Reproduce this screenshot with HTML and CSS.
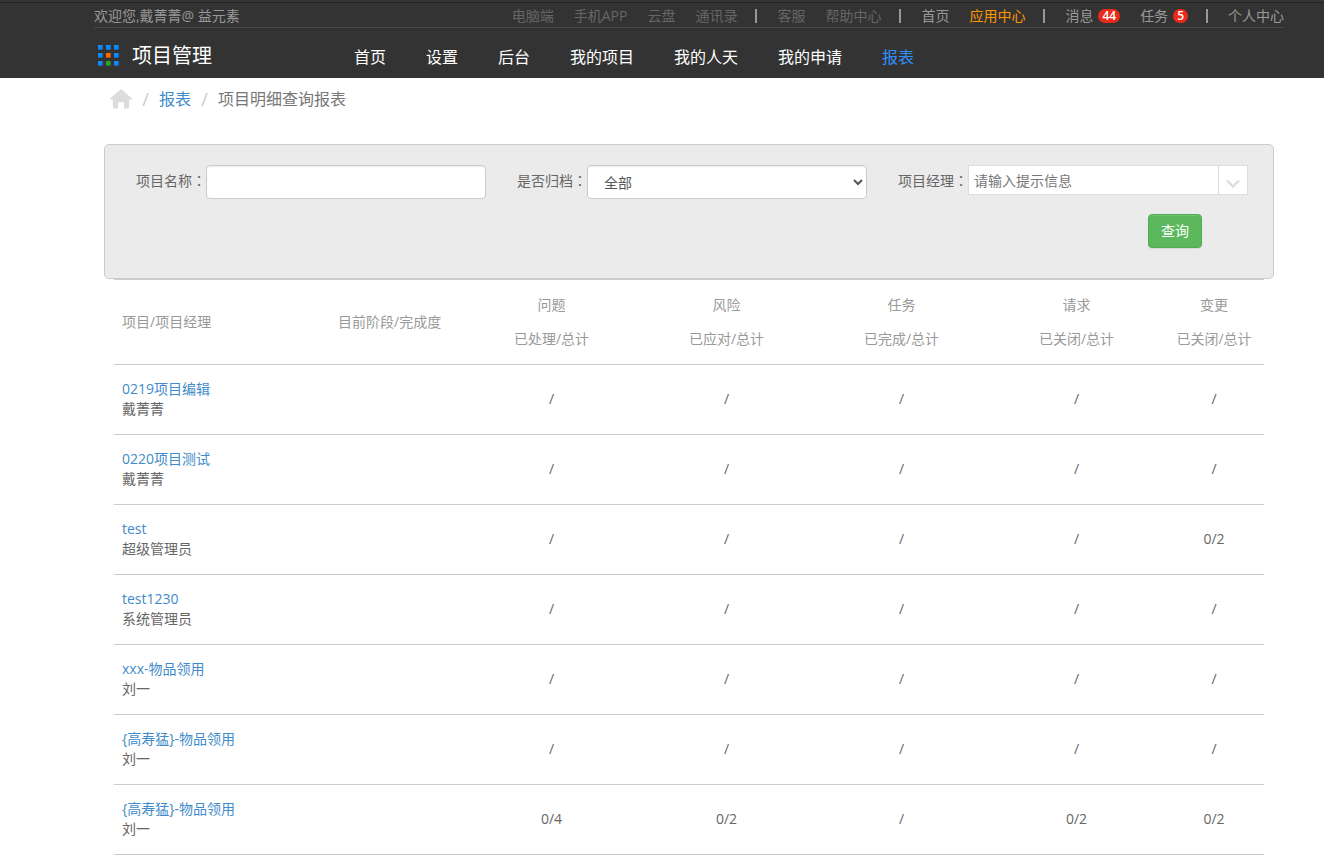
FILE: index.html
```html
<!DOCTYPE html>
<html lang="zh-CN">
<head>
<meta charset="utf-8">
<title>项目明细查询报表</title>
<link rel="stylesheet" href="styles.css">
</head>
<body>
<header class="header">
  <div class="topbar">
    <span class="welcome">欢迎您,戴菁菁@ 益元素</span>
    <ul class="toplinks">
      <li><a class="dim" href="#">电脑端</a></li>
      <li><a class="dim" href="#">手机APP</a></li>
      <li><a class="dim" href="#">云盘</a></li>
      <li><a class="dim" href="#">通讯录</a></li>
      <li class="bar"></li>
      <li><a class="dim" href="#">客服</a></li>
      <li><a class="dim" href="#">帮助中心</a></li>
      <li class="bar"></li>
      <li><a href="#">首页</a></li>
      <li><a class="hot" href="#">应用中心</a></li>
      <li class="bar"></li>
      <li><a href="#">消息<span class="badge">44</span></a></li>
      <li><a href="#">任务<span class="badge">5</span></a></li>
      <li class="bar"></li>
      <li><a href="#">个人中心</a></li>
    </ul>
  </div>
  <div class="mainbar">
    <a class="brand" href="#">
      <svg width="22" height="22" viewBox="0 0 22 22" aria-hidden="true">
        <g fill="#0a8cff">
          <rect x="0" y="0" width="4.6" height="4.6"/><rect x="8" y="0" width="4.6" height="4.6"/><rect x="16" y="0" width="4.6" height="4.6"/>
          <rect x="0" y="8" width="4.6" height="4.6"/><rect x="16" y="8" width="4.6" height="4.6"/>
          <rect x="0" y="16" width="4.6" height="4.6"/><rect x="16" y="16" width="4.6" height="4.6"/>
        </g>
        <rect x="8" y="8" width="4.6" height="4.6" fill="#ff6a00"/>
        <rect x="8" y="16" width="4.6" height="4.6" fill="#2aa52a"/>
      </svg>
      <span>项目管理</span>
    </a>
    <nav class="nav">
      <a href="#">首页</a>
      <a href="#">设置</a>
      <a href="#">后台</a>
      <a href="#">我的项目</a>
      <a href="#">我的人天</a>
      <a href="#">我的申请</a>
      <a class="active" href="#">报表</a>
    </nav>
  </div>
</header>

<main class="page">
  <nav class="crumbs">
    <a class="home" href="#" aria-label="首页">
      <svg width="22" height="20" viewBox="0 0 22 20" aria-hidden="true">
        <path fill="#dcdcdc" d="M11 0 L22 9.4 Q22 10.6 20.6 10.6 H19.2 V17.5 Q19.2 19.6 17.2 19.6 H14 V14.5 Q14 13.2 12.8 13.2 H9.2 Q8 13.2 8 14.5 V19.6 H4.8 Q2.8 19.6 2.8 17.5 V10.6 H1.4 Q0 10.6 0 9.4 Z"/>
      </svg>
    </a>
    <span class="sep">/</span>
    <a href="#">报表</a>
    <span class="sep">/</span>
    <span>项目明细查询报表</span>
  </nav>

  <form class="filter">
    <div class="fields">
      <div class="field">
        <label for="name">项目名称<span class="colon" lang="zh-TW">：</span></label>
        <input class="control" id="name" type="text">
      </div>
      <div class="field">
        <label for="archived">是否归档<span class="colon" lang="zh-TW">：</span></label>
        <select class="control" id="archived"><option>全部</option></select>
      </div>
      <div class="field">
        <label for="manager">项目经理<span class="colon" lang="zh-TW">：</span></label>
        <div class="combo">
          <input id="manager" type="text" placeholder="请输入提示信息">
          <button type="button" aria-label="展开">
            <svg width="16" height="10" viewBox="0 0 16 10" aria-hidden="true"><path d="M2 1.5 L8 7.5 L14 1.5" fill="none" stroke="#ddd" stroke-width="2.4"/></svg>
          </button>
        </div>
      </div>
    </div>
    <div class="actions"><button class="query" type="button">查询</button></div>
  </form>

  <table class="report">
    <colgroup>
      <col class="c-name"><col class="c-stage"><col class="c-num"><col class="c-num"><col class="c-num"><col class="c-num"><col class="c-last">
    </colgroup>
    <thead>
      <tr>
        <th class="left">项目/项目经理</th>
        <th class="left">目前阶段/完成度</th>
        <th>问题<br>已处理/总计</th>
        <th>风险<br>已应对/总计</th>
        <th>任务<br>已完成/总计</th>
        <th>请求<br>已关闭/总计</th>
        <th>变更<br>已关闭/总计</th>
      </tr>
    </thead>
    <tbody>
      <tr><td class="left"><a href="#">0219项目编辑</a><br>戴菁菁</td><td></td><td>/</td><td>/</td><td>/</td><td>/</td><td>/</td></tr>
      <tr><td class="left"><a href="#">0220项目测试</a><br>戴菁菁</td><td></td><td>/</td><td>/</td><td>/</td><td>/</td><td>/</td></tr>
      <tr><td class="left"><a href="#">test</a><br>超级管理员</td><td></td><td>/</td><td>/</td><td>/</td><td>/</td><td>0/2</td></tr>
      <tr><td class="left"><a href="#">test1230</a><br>系统管理员</td><td></td><td>/</td><td>/</td><td>/</td><td>/</td><td>/</td></tr>
      <tr><td class="left"><a href="#">xxx-物品领用</a><br>刘一</td><td></td><td>/</td><td>/</td><td>/</td><td>/</td><td>/</td></tr>
      <tr><td class="left"><a href="#">{高寿猛}-物品领用</a><br>刘一</td><td></td><td>/</td><td>/</td><td>/</td><td>/</td><td>/</td></tr>
      <tr><td class="left"><a href="#">{高寿猛}-物品领用</a><br>刘一</td><td></td><td>0/4</td><td>0/2</td><td>/</td><td>0/2</td><td>0/2</td></tr>
    </tbody>
  </table>
</main>
</body>
</html>
```
FILE: styles.css
```css
* { box-sizing: border-box; }

body {
  margin: 0;
  background: #fff;
  color: #666;
  font: 14px/20px "Open Sans", "Noto Sans CJK SC", sans-serif;
}

a { color: #428bca; text-decoration: none; }
input, select, button { font: inherit; color: inherit; }

/* Header */
.header {
  background: #333;
  border-top: 2px solid #35363a;
  box-shadow: inset 0 1px #222;
  padding: 0 40px 0 94px;
}

.topbar {
  display: flex;
  justify-content: space-between;
  height: 26px;
  padding-top: 4px;
  border-bottom: 1px solid #484848;
  color: #999;
  white-space: nowrap;
}

.toplinks { display: flex; margin: 0; padding: 0; list-style: none; }
.toplinks li { margin-left: 20px; }
.toplinks .bar { width: 2px; height: 14px; margin: 3px 0 0 18px; background: #999; }
.toplinks a { display: flex; align-items: center; color: #999; }
.toplinks .dim { color: #666; }
.toplinks .hot { color: #ff9800; }

.badge {
  margin-left: 5px;
  padding: 0 4px;
  border-radius: 7px;
  background: #ea2a1b;
  color: #fff;
  font-size: 12px;
  font-weight: 600;
  line-height: 14px;
}

.mainbar { display: flex; align-items: center; height: 50px; }
.brand {
  display: flex;
  align-items: center;
  gap: 12px;
  width: 260px;
  padding: 5px 0 0 4px;
  color: #fff;
  font-size: 20px;
  line-height: 30px;
}
.nav { display: flex; gap: 40px; padding-top: 8px; font-size: 16px; line-height: 24px; white-space: nowrap; }
.nav a { color: #fff; }
.nav .active { color: #2f8fff; }

/* Page */
.page { padding: 0 50px 4px 104px; }

.crumbs {
  display: flex;
  align-items: center;
  gap: 10px;
  height: 42px;
  padding-left: 6px;
  font-size: 16px;
  line-height: 24px;
  color: #777;
}
.home { display: flex; }
.sep { width: 7px; color: #ccc; font-size: 18px; text-align: center; }

/* Filter panel */
.filter {
  margin-top: 24px;
  padding: 20px 25px 30px 31px;
  border: 1px solid #ccc;
  border-radius: 5px;
  background: #ebebeb;
}
.fields { display: flex; gap: 31px; }
.field { display: flex; flex: 1; align-items: flex-start; }
.field label { flex: none; width: 70px; line-height: 30px; white-space: nowrap; }
.colon { font-family: "Noto Sans CJK TC", sans-serif; }
.control {
  flex: 1;
  min-width: 0;
  height: 34px;
  padding: 6px 12px;
  border: 1px solid #ccc;
  border-radius: 4px;
  background: #fff;
  color: #555;
  box-shadow: inset 0 1px 1px rgba(0, 0, 0, 0.08);
}
select.control { padding: 6px 0 6px 12px; }
.combo { display: flex; flex: 1; min-width: 0; height: 30px; border: 1px solid #ddd; background: #fff; }
.combo input { flex: 1; min-width: 0; padding: 1px 5px 0; border: 0; background: none; }
.combo input::placeholder { color: #777; }
.combo button {
  display: flex;
  align-items: center;
  justify-content: center;
  width: 29px;
  padding: 8px 0 0;
  border: 0;
  border-left: 1px solid #ddd;
  background: none;
}

.actions { display: flex; justify-content: flex-end; padding: 15px 46px 0 0; }
.query {
  height: 34px;
  padding: 0 12px;
  border: 1px solid #4cae4c;
  border-radius: 4px;
  background: #5cb85c;
  color: #fff;
  box-shadow: inset 0 1px rgba(255, 255, 255, 0.15), 0 1px 1px rgba(0, 0, 0, 0.08);
}

/* Report table */
.report {
  width: calc(100% - 20px);
  margin: 0 10px;
  border-collapse: separate;
  border-spacing: 0;
  table-layout: fixed;
}
.c-name { width: 216px; }
.c-stage { width: 134px; }
.c-num { width: 175px; }
.c-last { width: 100px; }

.report th {
  padding: 8px;
  border-top: 1px solid #ccc;
  color: #999;
  font-weight: normal;
  line-height: 34px;
  white-space: nowrap;
}
.report td { padding: 14px 8px 15px; border-top: 1px solid #ccc; text-align: center; }
.report tbody tr:last-child td { border-bottom: 1px solid #ccc; }
.report .left { text-align: left; }
```
